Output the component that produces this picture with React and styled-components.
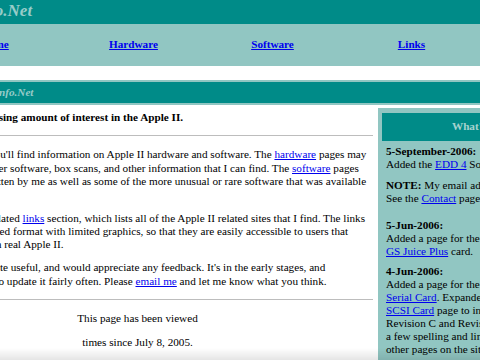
import React from 'react';
import styled, { createGlobalStyle } from 'styled-components';

const TEAL = '#008b88';
const PALE = '#91c6c2';
const TITLE = '#97ccc8';

const GlobalStyle = createGlobalStyle`
  html, body {
    margin: 0;
    padding: 0;
    background: #fff;
  }
  body {
    font-family: "Liberation Serif", "Times New Roman", serif;
    font-size: 11.2px;
    line-height: 13.4px;
    color: #000;
    overflow: hidden;
  }
`;

// the window only shows part of a wider page (scrolled sideways)
const Viewport = styled.div`
  width: 480px;
  height: 360px;
  overflow: hidden;
`;

const Page = styled.div`
  width: 720px;
  margin-left: -98px;
`;

const TitleBar = styled.div`
  height: 24px;
  background: ${TEAL};
  padding-left: 22px;
  color: ${TITLE};
  font-size: 17px;
  line-height: 21px;
  font-weight: bold;
  font-style: italic;
`;

const NavBar = styled.nav`
  height: 42px;
  background: ${PALE};
  display: flex;
  align-items: center;
  padding-left: 23px;
  margin-bottom: 14px;
`;

const NavItem = styled.div`
  flex: 0 0 139px;
  text-align: center;
  font-weight: bold;
`;

const Link = styled.a`
  color: #0000ee;
  text-decoration: underline;
`;

const SubHeader = styled.div`
  border: 2px solid ${PALE};
  background: ${TEAL};
  height: 21px;
  line-height: 21px;
  padding-left: 3px;
  color: ${TITLE};
  font-weight: bold;
  font-style: italic;
`;

const Content = styled.div`
  display: flex;
  align-items: flex-start;
  gap: 5px;
  padding-top: 3px;
`;

const Main = styled.main`
  width: 471px;
  padding-top: 3px;
`;

const Heading = styled.div`
  font-weight: bold;
  white-space: nowrap;
`;

const Rule = styled.hr`
  height: 0;
  border: 0;
  border-top: 1px solid #bdbdbd;
  margin: 11px 0 12px;
`;

const Para = styled.p`
  margin: 0 0 9.5px;
  white-space: nowrap;
`;

const Counter = styled.div`
  text-align: center;
  white-space: nowrap;
`;

const CounterLine = styled.div`
  margin-bottom: ${(p) => (p.$gap ? '11px' : '0')};
`;

const Sidebar = styled.aside`
  width: 198px;
  background: ${PALE};
  padding: 5px 4px 40px;
`;

const SideHead = styled.div`
  height: 28px;
  background: ${TEAL};
  color: #a6d3cf;
  font-weight: bold;
  display: flex;
  align-items: center;
  justify-content: center;
`;

const SideBody = styled.div`
  padding: 4px 4px 0;
  line-height: 13px;
  white-space: nowrap;
`;

const Entry = styled.p`
  margin: 0 0 ${(p) => (p.$wide ? '14px' : '7.5px')};
`;

const BottomFade = styled.div`
  position: fixed;
  left: 0;
  right: 0;
  bottom: 0;
  height: 12px;
  background: linear-gradient(rgba(0, 0, 0, 0), rgba(0, 0, 0, 0.1));
  pointer-events: none;
`;

const navLinks = ['Home', 'Hardware', 'Software', 'Links', 'Contact'];

export default function App() {
  return (
    <>
      <GlobalStyle />
      <Viewport>
        <Page>
          <TitleBar>Apple2Info.Net</TitleBar>
          <NavBar>
            {navLinks.map((l) => (
              <NavItem key={l}>
                <Link href="#">{l}</Link>
              </NavItem>
            ))}
          </NavBar>
          <SubHeader>Welcome to Apple2Info.Net</SubHeader>
          <Content>
            <Main>
              <Heading>I've noticed a surprising amount of interest in the Apple II.</Heading>
              <Rule />
              <Para>
                Here, on this page, you'll find information on Apple II hardware and software. The <Link href="#">hardware</Link> pages may<br />
                include manuals, driver software, box scans, and other information that I can find. The <Link href="#">software</Link> pages<br />
                contain programs written by me as well as some of the more unusual or rare software that was available<br />
                for the Apple II.
              </Para>
              <Para>
                This site also has a related <Link href="#">links</Link> section, which lists all of the Apple II related sites that I find. The links<br />
                are listed in a simplified format with limited graphics, so that they are easily accessible to users that<br />
                are browsing it from a real Apple II.
              </Para>
              <Para>
                I hope you find this site useful, and would appreciate any feedback. It's in the early stages, and<br />
                I'm going to attempt to update it fairly often. Please <Link href="#">email me</Link> and let me know what you think.
              </Para>
              <Rule />
              <Counter>
                <CounterLine $gap>This page has been viewed</CounterLine>
                <CounterLine>times since July 8, 2005.</CounterLine>
              </Counter>
            </Main>
            <Sidebar>
              <SideHead>What's New</SideHead>
              <SideBody>
                <Entry>
                  <b>5-September-2006:</b><br />
                  Added the <Link href="#">EDD 4</Link> Software page.
                </Entry>
                <Entry $wide>
                  <b>NOTE:</b> My email address has changed.<br />
                  See the <Link href="#">Contact</Link> page for the new one.
                </Entry>
                <Entry>
                  <b>5-Jun-2006:</b><br />
                  Added a page for the AE<br />
                  <Link href="#">GS Juice Plus</Link> card.
                </Entry>
                <Entry>
                  <b>4-Jun-2006:</b><br />
                  Added a page for the Apple II<br />
                  <Link href="#">Serial Card</Link>. Expanded the Apple II<br />
                  <Link href="#">SCSI Card</Link> page to include<br />
                  Revision C and Revision D. Made<br />
                  a few spelling and link fixes on<br />
                  other pages on the site.
                </Entry>
              </SideBody>
            </Sidebar>
          </Content>
        </Page>
      </Viewport>
      <BottomFade />
    </>
  );
}
